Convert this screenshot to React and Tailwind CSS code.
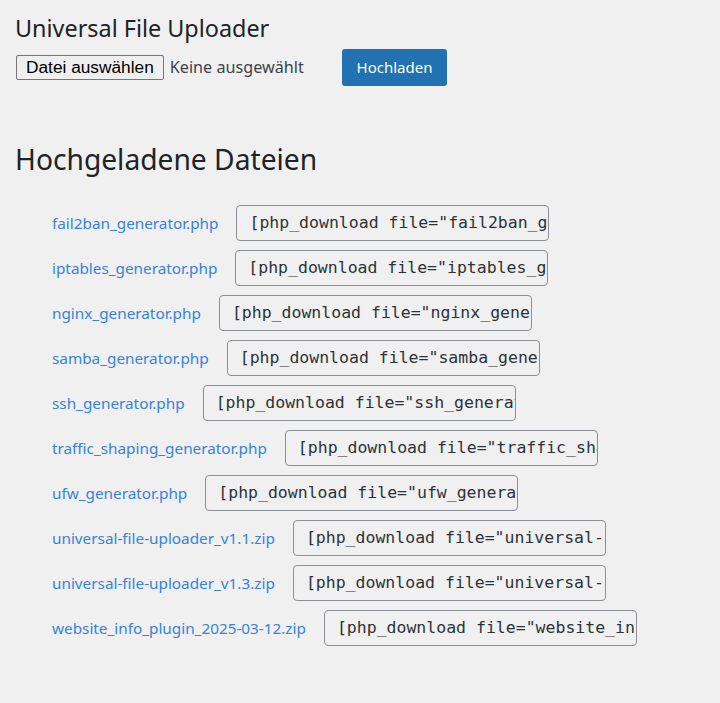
import React from "react";

const files = [
  "fail2ban_generator.php",
  "iptables_generator.php",
  "nginx_generator.php",
  "samba_generator.php",
  "ssh_generator.php",
  "traffic_shaping_generator.php",
  "ufw_generator.php",
  "universal-file-uploader_v1.1.zip",
  "universal-file-uploader_v1.3.zip",
  "website_info_plugin_2025-03-12.zip",
];

export default function App() {
  return (
    <div className="min-h-[703px] w-[720px] bg-[#f0f0f0] pl-[15px] pt-[13px] text-[#1d2327] [font-family:'Noto_Sans',sans-serif]">
      <h1 className="text-[23.4px] leading-[30px] text-[#1d2327]">Universal File Uploader</h1>
      <div className="mt-[6px] flex items-center">
        <div className="flex w-[327px] items-center">
          <div className="ml-[1px] flex h-[25px] items-center rounded-[2px] border border-[#767676] bg-[#efefef] px-[9px] text-[17.3px] text-black [font-family:'Liberation_Sans',sans-serif]">
            Datei auswählen
          </div>
          <span className="ml-[6px] text-[16.2px] text-[#3c434a]">Keine ausgewählt</span>
        </div>
        <button className="flex h-[37px] w-[105px] items-center justify-center rounded-[3px] bg-[#2271b1] text-[15px] text-white">
          Hochladen
        </button>
      </div>
      <h2 className="mt-[54px] text-[28.2px] leading-[38px] text-[#1d2327]">Hochgeladene Dateien</h2>
      <ul className="mt-[27px] pl-[37px]">
        {files.map((name) => (
          <li key={name} className="mb-[9px] flex h-[36px] items-center gap-[18px]">
            <a className="text-[15.3px] text-[#3582e4]">{name}</a>
            <div className="flex h-[36px] w-[313px] items-center overflow-hidden whitespace-nowrap rounded-[4px] border border-[#8c8f94] pl-[12px] text-[16.5px] text-[#2c3338] [font-family:'DejaVu_Sans_Mono',monospace]">
              [php_download file="{name}"]
            </div>
          </li>
        ))}
      </ul>
    </div>
  );
}
